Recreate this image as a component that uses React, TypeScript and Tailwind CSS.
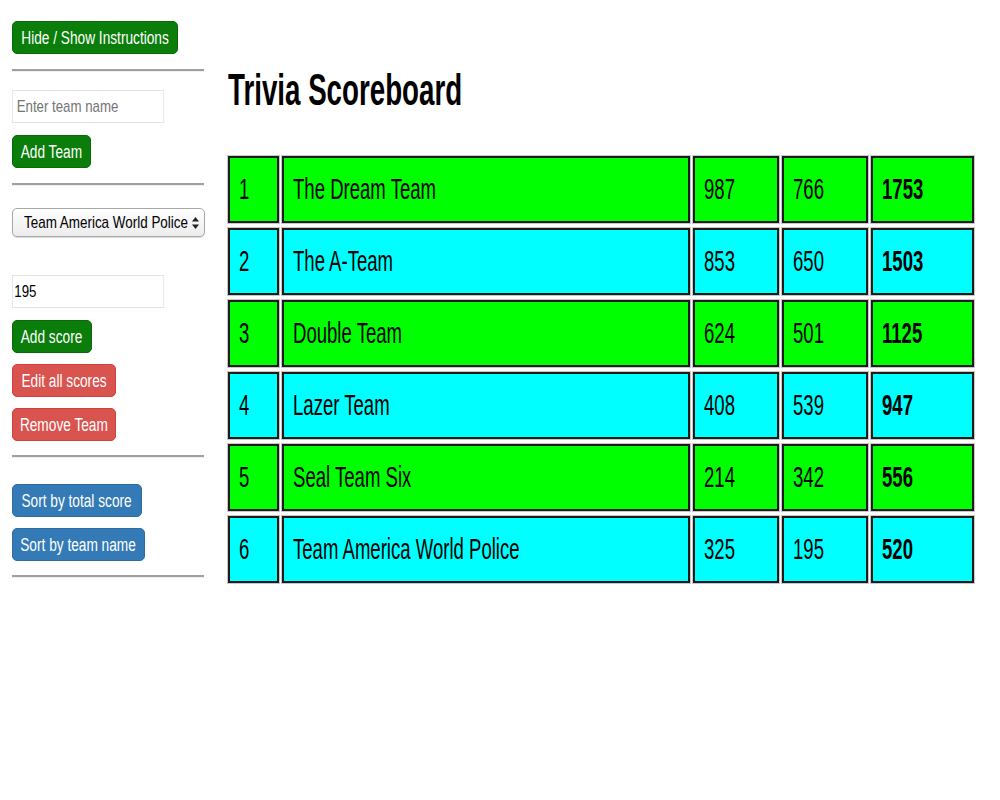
import React from "react";

const rows = [
  { r: 1, name: "The Dream Team", a: 987, b: 766, t: 1753 },
  { r: 2, name: "The A-Team", a: 853, b: 650, t: 1503 },
  { r: 3, name: "Double Team", a: 624, b: 501, t: 1125 },
  { r: 4, name: "Lazer Team", a: 408, b: 539, t: 947 },
  { r: 5, name: "Seal Team Six", a: 214, b: 342, t: 556 },
  { r: 6, name: "Team America World Police", a: 325, b: 195, t: 520 },
];

function Hr() {
  return <div className="w-[192px] border-t-2 border-t-[#a0a0a0] border-b border-b-[#f0f0f0]" />;
}

function Btn({ color, children, w }: { color: "green" | "red" | "blue"; children: React.ReactNode; w: string }) {
  const c =
    color === "green"
      ? "bg-[#0a7d0a] border-[#0a6a0a]"
      : color === "red"
      ? "bg-[#d9534f] border-[#d43f3a]"
      : "bg-[#337ab7] border-[#2e6da4]";
  return (
    <button className={`${c} ${w} h-[33px] border rounded-[5px] text-white text-[18px] leading-none flex items-center justify-center overflow-visible`}>
      <span className="inline-block whitespace-nowrap scale-x-[0.76] origin-center">{children}</span>
    </button>
  );
}

export default function App() {
  return (
    <div
      className="w-[1000px] h-[800px] bg-white flex text-black overflow-hidden"
      style={{ fontFamily: '"Liberation Sans", Arial, sans-serif' }}
    >
      <div className="w-[228px] shrink-0 pl-[12px] pt-[21px] flex flex-col items-start">
        <Btn color="green" w="w-[166px]">Hide / Show Instructions</Btn>
        <div className="mt-[15px]"><Hr /></div>
        <input
          className="mt-[18px] w-[195px] h-[33px] border border-[#e2e2e2] px-[5px] text-[17px] placeholder-[#757575] outline-none scale-x-[0.78] origin-left"
          placeholder="Enter team name"
        />
        <div className="mt-[12px]"><Btn color="green" w="w-[79px]">Add Team</Btn></div>
        <div className="mt-[15px]"><Hr /></div>
        <div className="mt-[22px] w-[193px] h-[29px] rounded-[5px] border border-[#a8a8a8] bg-gradient-to-b from-white to-[#ececec] flex items-center pl-[11px] pr-[5px] text-[17px] shadow-[0_1px_1px_rgba(0,0,0,0.15)]">
          <span className="flex-1 min-w-0 whitespace-nowrap">
            <span className="inline-block scale-x-[0.79] origin-left">Team America World Police</span>
          </span>
          <svg width="7" height="12" viewBox="0 0 7 12" className="shrink-0">
            <path d="M3.5 0 L7 4.5 L0 4.5 Z" fill="#222" />
            <path d="M3.5 12 L7 7.5 L0 7.5 Z" fill="#222" />
          </svg>
        </div>
        <input
          className="mt-[38px] w-[195px] h-[33px] border border-[#e2e2e2] px-[2px] text-[17px] outline-none scale-x-[0.78] origin-left"
          defaultValue="195"
        />
        <div className="mt-[12px]"><Btn color="green" w="w-[80px]">Add score</Btn></div>
        <div className="mt-[11px]"><Btn color="red" w="w-[104px]">Edit all scores</Btn></div>
        <div className="mt-[11px]"><Btn color="red" w="w-[104px]">Remove Team</Btn></div>
        <div className="mt-[14px]"><Hr /></div>
        <div className="mt-[26px]"><Btn color="blue" w="w-[130px]">Sort by total score</Btn></div>
        <div className="mt-[11px]"><Btn color="blue" w="w-[133px]">Sort by team name</Btn></div>
        <div className="mt-[14px]"><Hr /></div>
      </div>
      <div className="flex-1 pt-[66px]">
        <h1 className="text-[44px] font-bold leading-[48px] whitespace-nowrap">
          <span className="inline-block scale-x-[0.63] origin-left">Trivia Scoreboard</span>
        </h1>
        <table className="mt-[37px] ml-[-3px] border-separate border-spacing-x-[3px] border-spacing-y-[5px] text-[29px]">
          <tbody>
            {rows.map((row, i) => {
              const bg = i % 2 === 0 ? "bg-[#00ff00]" : "bg-[#00ffff]";
              const td = `${bg} h-[67px] border-2 border-[#1a1a1a] shadow-[0_0_0_1px_#c8c8c8] pl-[9px] align-middle whitespace-nowrap`;
              const sq = "inline-block scale-x-[0.64] origin-left";
              return (
                <tr key={row.r}>
                  <td className={`${td} w-[51px]`}><span className={sq}>{row.r}</span></td>
                  <td className={`${td} w-[408px]`}><span className={sq}>{row.name}</span></td>
                  <td className={`${td} w-[86px]`}><span className={sq}>{row.a}</span></td>
                  <td className={`${td} w-[86px]`}><span className={sq}>{row.b}</span></td>
                  <td className={`${td} w-[103px] font-bold`}><span className={sq}>{row.t}</span></td>
                </tr>
              );
            })}
          </tbody>
        </table>
      </div>
    </div>
  );
}
